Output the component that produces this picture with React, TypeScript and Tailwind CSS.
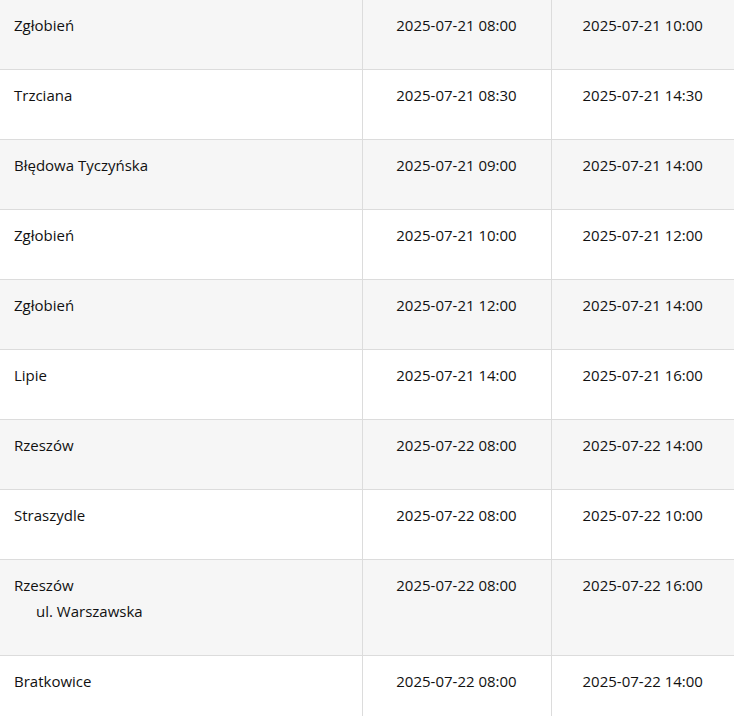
const rows: { place: string; sub?: string; from: string; to: string }[] = [
  { place: "Zgłobień", from: "2025-07-21 08:00", to: "2025-07-21 10:00" },
  { place: "Trzciana", from: "2025-07-21 08:30", to: "2025-07-21 14:30" },
  { place: "Błędowa Tyczyńska", from: "2025-07-21 09:00", to: "2025-07-21 14:00" },
  { place: "Zgłobień", from: "2025-07-21 10:00", to: "2025-07-21 12:00" },
  { place: "Zgłobień", from: "2025-07-21 12:00", to: "2025-07-21 14:00" },
  { place: "Lipie", from: "2025-07-21 14:00", to: "2025-07-21 16:00" },
  { place: "Rzeszów", from: "2025-07-22 08:00", to: "2025-07-22 14:00" },
  { place: "Straszydle", from: "2025-07-22 08:00", to: "2025-07-22 10:00" },
  { place: "Rzeszów", sub: "ul. Warszawska", from: "2025-07-22 08:00", to: "2025-07-22 16:00" },
  { place: "Bratkowice", from: "2025-07-22 08:00", to: "2025-07-22 14:00" },
];

const App = () => {
  return (
    <div className="w-[734px] h-[716px] overflow-hidden bg-white text-[#111] font-['Open_Sans',sans-serif] text-[15px]">
      <table className="w-full border-collapse table-fixed">
        <colgroup>
          <col className="w-[362px]" />
          <col className="w-[189px]" />
          <col />
        </colgroup>
        <tbody>
          {rows.map((r, i) => (
            <tr key={i} className={`border-b border-[#dcdcdc] ${i % 2 === 0 ? "bg-[#f6f6f6]" : "bg-white"}`}>
              <td className="align-top pl-[14px] pt-[15px] pb-[34px] leading-[20px] border-r border-[#dcdcdc]">
                <div>{r.place}</div>
                {r.sub && (
                  <div className="flex mt-[6px]">
                    <span className="w-[22px] shrink-0" />
                    <span>{r.sub}</span>
                  </div>
                )}
              </td>
              <td className="align-top text-center pt-[15px] leading-[20px] border-r border-[#dcdcdc]">{r.from}</td>
              <td className="align-top text-center pt-[15px] leading-[20px]">{r.to}</td>
            </tr>
          ))}
        </tbody>
      </table>
    </div>
  );
};

export default App;
